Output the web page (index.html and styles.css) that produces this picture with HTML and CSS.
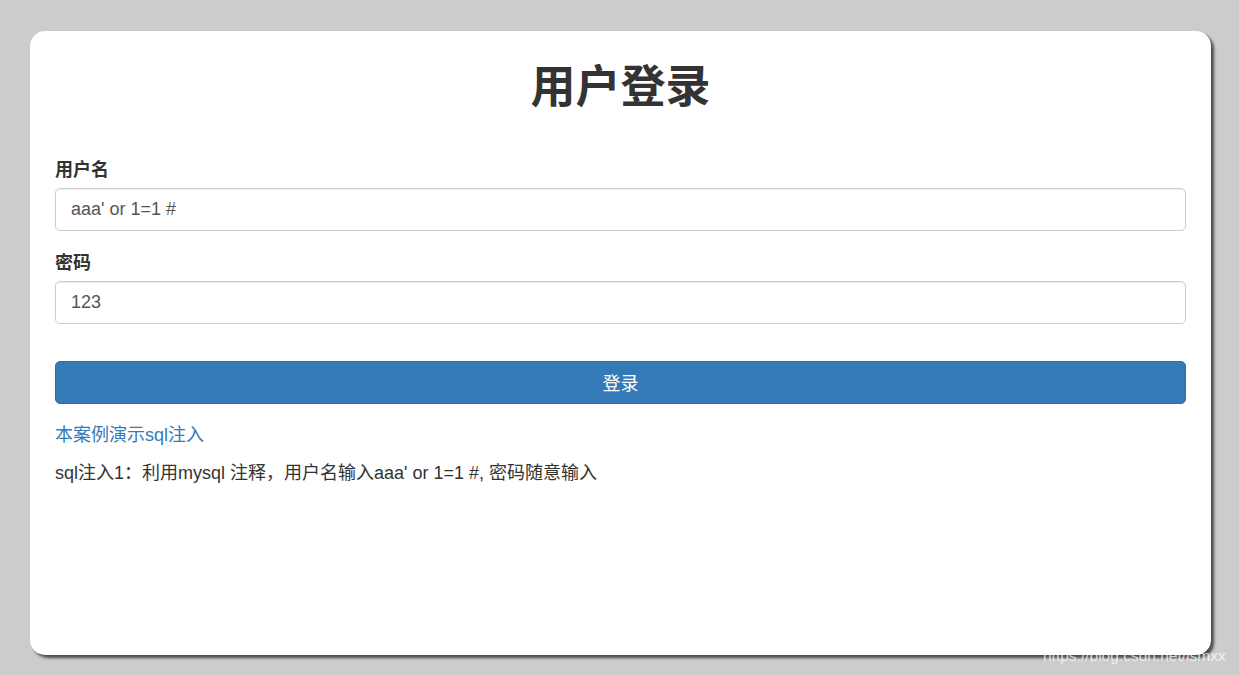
FILE: index.html
```html
<!DOCTYPE html>
<html lang="zh-CN">
<head>
<meta charset="utf-8">
<title>用户登录</title>
<link rel="stylesheet" href="styles.css">
</head>
<body>
<div class="card">
  <h1 class="title">用户登录</h1>
  <form class="login-form">
    <div class="form-group">
      <label class="label" for="username">用户名</label>
      <input class="form-control" id="username" type="text" value="aaa' or 1=1 #">
    </div>
    <div class="form-group">
      <label class="label" for="password">密码</label>
      <input class="form-control" id="password" type="text" value="123">
    </div>
    <button class="btn-primary" type="button">登录</button>
  </form>
  <a class="demo-link" href="#">本案例演示sql注入</a>
  <p class="note">sql注入1：利用mysql 注释，用户名输入aaa' or 1=1 #, 密码随意输入</p>
</div>
<div class="watermark">https://blog.csdn.net/lsmxx</div>
</body>
</html>
```

FILE: styles.css
```css
* { box-sizing: border-box; }

html, body {
  margin: 0;
  height: 100%;
}

body {
  background: #cccccc;
  padding: 31px 0 0 30px;
  font-family: "Liberation Sans", Arial, "Noto Sans CJK SC", sans-serif;
  font-size: 18px;
  line-height: 25px;
  color: #333333;
  overflow: hidden;
}

.card {
  width: 1181px;
  height: 624px;
  background: #ffffff;
  border-radius: 15px;
  box-shadow: 3px 3px 3px #4a4a4a;
  padding: 32px 25px 0 25px;
}

.title {
  margin: 0 0 45.5px 0;
  font-size: 45px;
  line-height: 49.5px;
  font-weight: bold;
  text-align: center;
  color: #333333;
}

.login-form {
  display: flex;
  flex-direction: column;
}

.form-group {
  display: flex;
  flex-direction: column;
  margin-bottom: 20.5px;
}

.label {
  font-weight: bold;
  line-height: 25px;
  margin-bottom: 5px;
}

.form-control {
  height: 42.5px;
  width: 100%;
  padding: 7.5px 15px;
  font-family: "Liberation Sans", Arial, "Noto Sans CJK SC", sans-serif;
  font-size: 18px;
  color: #555555;
  background: #ffffff;
  border: 1px solid #cccccc;
  border-radius: 5px;
  box-shadow: inset 0 1px 1px rgba(0, 0, 0, 0.075);
  outline: none;
}

.btn-primary {
  margin-top: 17px;
  height: 42.5px;
  width: 100%;
  background: #337ab7;
  border: 1px solid #2e6da4;
  border-radius: 5px;
  color: #ffffff;
  font-family: "Liberation Sans", Arial, "Noto Sans CJK SC", sans-serif;
  font-size: 18px;
}

.demo-link {
  display: block;
  margin-top: 19px;
  color: #337ab7;
  text-decoration: none;
}

.note {
  margin: 13px 0 0 0;
}

.watermark {
  position: absolute;
  left: 1043px;
  top: 646px;
  font-family: "Liberation Sans", Arial, sans-serif;
  font-size: 15.5px;
  line-height: 20px;
  color: rgba(255, 255, 255, 0.75);
}
```
